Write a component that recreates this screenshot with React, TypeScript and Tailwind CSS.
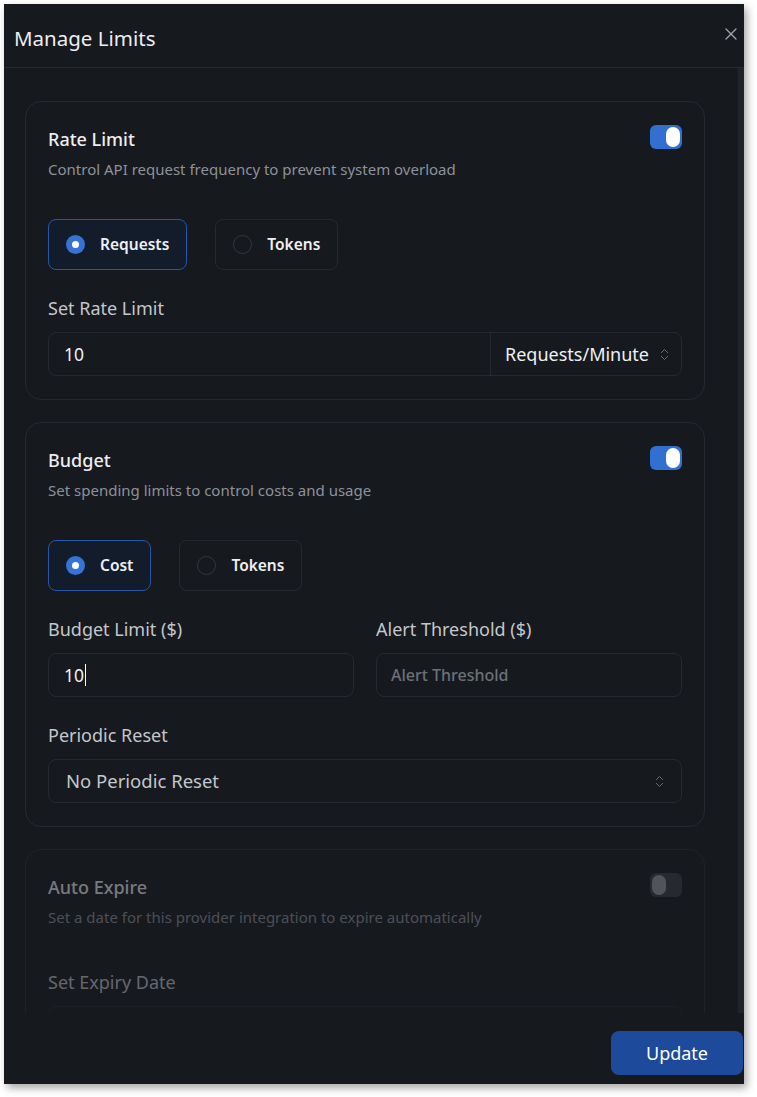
import { X, ChevronsUpDown } from 'lucide-react';

const font = { fontFamily: '"Noto Sans", "Open Sans", sans-serif' };

function Toggle({ on }: { on: boolean }) {
  return (
    <div
      className={`flex h-6 w-8 shrink-0 items-center rounded-md px-[2px] ${
        on ? 'justify-end bg-[#3170d0]' : 'justify-start bg-[#3a3f47]'
      }`}
    >
      <div className={`h-5 w-[14px] rounded-full ${on ? 'bg-white' : 'bg-[#9a9ea4]'}`} />
    </div>
  );
}

function RadioCard({ label, checked }: { label: string; checked?: boolean }) {
  return (
    <div
      className={`flex h-[51px] items-center gap-[15px] rounded-lg border px-[17px] ${
        checked ? 'border-[#2656a8] bg-[#131c2b]' : 'border-[#262a30] bg-transparent'
      }`}
    >
      {checked ? (
        <span className="flex h-[19px] w-[19px] items-center justify-center rounded-full bg-[#3673d4]">
          <span className="h-[7px] w-[7px] rounded-full bg-white" />
        </span>
      ) : (
        <span className="h-[19px] w-[19px] rounded-full border border-[#33373d]" />
      )}
      <span className="pt-px text-[15.5px] font-semibold text-[#eef0f2]">{label}</span>
    </div>
  );
}

function CardHeader({ title, desc, on }: { title: string; desc: string; on: boolean }) {
  return (
    <div className="flex items-start justify-between">
      <div>
        <h3 className="text-[18px] leading-7 font-medium text-[#eceef0]">{title}</h3>
        <p className="mt-1 text-[15px] leading-6 text-[#8d9299]">{desc}</p>
      </div>
      <Toggle on={on} />
    </div>
  );
}

function Label({ children }: { children: string }) {
  return <div className="mb-2.5 text-[18px] leading-7 text-[#c3c7cc]">{children}</div>;
}

export default function App() {
  return (
    <div className="min-h-screen bg-white p-1" style={font}>
      <div className="flex h-[1080px] w-[740px] flex-col overflow-hidden bg-[#16191e] shadow-[3px_4px_8px_rgba(0,0,0,0.35)]">
        {/* header */}
        <div className="flex h-[64px] shrink-0 items-center justify-between border-b border-[#272b31] pl-[10px] pr-[3px] pt-[5px]">
          <h2 className="text-[20.5px] text-[#eceef0]">Manage Limits</h2>
          <X size={20} strokeWidth={1.5} className="-mt-2 text-[#a3a7ad]" />
        </div>

        {/* scroll area */}
        <div className="flex min-h-0 flex-1">
          <div className="flex flex-1 flex-col gap-[22px] overflow-hidden pl-[21px] pr-[33px] pt-[33px]">
            <section className="shrink-0 rounded-2xl border border-[#262a30] pt-[23px] pr-[22px] pb-[23px] pl-[22px]">
              <CardHeader
                title="Rate Limit"
                desc="Control API request frequency to prevent system overload"
                on
              />
              <div className="mt-[38px] flex gap-[28px]">
                <RadioCard label="Requests" checked />
                <RadioCard label="Tokens" />
              </div>
              <div className="mt-6">
                <Label>Set Rate Limit</Label>
                <div className="flex h-[44px] rounded-lg border border-[#262a30]">
                  <div className="flex flex-1 items-center px-[15px] text-[17.5px] text-[#eef0f2]">10</div>
                  <div className="flex items-center gap-[8px] border-l border-[#262a30] pl-[14px] pr-[9px] text-[18px] text-[#eef0f2]">
                    Requests/Minute
                    <ChevronsUpDown size={15} strokeWidth={1.5} className="text-[#6f747b]" />
                  </div>
                </div>
              </div>
            </section>

            <section className="shrink-0 rounded-2xl border border-[#262a30] pt-[23px] pr-[22px] pb-[23px] pl-[22px]">
              <CardHeader title="Budget" desc="Set spending limits to control costs and usage" on />
              <div className="mt-[38px] flex gap-[28px]">
                <RadioCard label="Cost" checked />
                <RadioCard label="Tokens" />
              </div>
              <div className="mt-6 grid grid-cols-2 gap-[22px]">
                <div>
                  <Label>Budget Limit ($)</Label>
                  <div className="flex h-[44px] items-center rounded-lg border border-[#262a30] px-[15px] text-[17.5px] text-[#eef0f2]">
                    10<span className="ml-px h-[22px] w-px bg-white" />
                  </div>
                </div>
                <div>
                  <Label>Alert Threshold ($)</Label>
                  <div className="flex h-[44px] items-center rounded-lg border border-[#262a30] px-[14px] text-[16px] font-medium text-[#6c7178]">
                    Alert Threshold
                  </div>
                </div>
              </div>
              <div className="mt-6">
                <Label>Periodic Reset</Label>
                <div className="flex h-[44px] items-center justify-between rounded-lg border border-[#262a30] pl-[17px] pr-[14px] text-[18.5px] text-[#c3c7cc]">
                  No Periodic Reset
                  <ChevronsUpDown size={15} strokeWidth={1.5} className="text-[#6f747b]" />
                </div>
              </div>
            </section>

            <section className="shrink-0 rounded-2xl border border-[#1f2328] pt-[23px] pr-[22px] pb-[23px] pl-[22px]">
              <div className="opacity-45">
                <CardHeader
                  title="Auto Expire"
                  desc="Set a date for this provider integration to expire automatically"
                  on={false}
                />
                <div className="mt-[39px]">
                  <Label>Set Expiry Date</Label>
                  <div className="h-[44px] rounded-lg border border-[#262a30]" />
                </div>
              </div>
            </section>
          </div>
          {/* scrollbar rail */}
          <div className="w-[6px] shrink-0 bg-[#202328]" />
        </div>

        {/* footer */}
        <div className="flex h-[71px] shrink-0 justify-end pr-px pt-[18px]">
          <button className="h-[44px] w-[132px] rounded-lg bg-[#1d4a9b] text-[18px] text-white">
            Update
          </button>
        </div>
      </div>
    </div>
  );
}
